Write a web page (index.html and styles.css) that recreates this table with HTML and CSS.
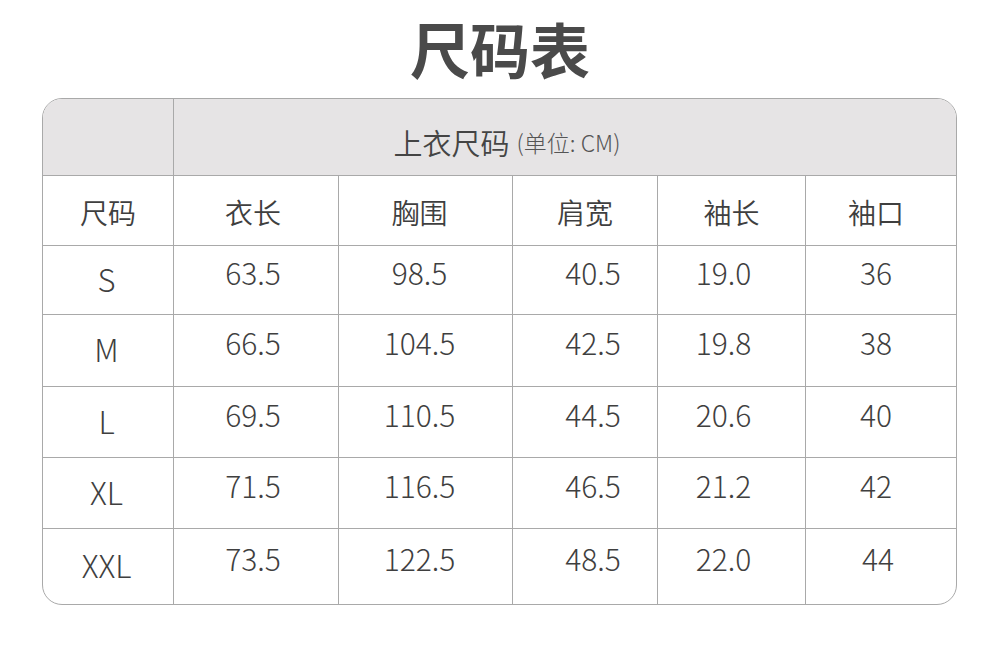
FILE: index.html
```html
<!DOCTYPE html>
<html lang="zh-CN">
<head>
<meta charset="utf-8">
<title>尺码表</title>
<link rel="stylesheet" href="styles.css">
</head>
<body>
<div class="page">
  <h1 class="title">尺码表</h1>
  <div class="table">
    <div class="cell head blank"></div>
    <div class="cell head span">上衣尺码<span class="unit">(单位: CM)</span></div>

    <div class="cell r2 first">尺码</div>
    <div class="cell r2 c2">衣长</div>
    <div class="cell r2 c3">胸围</div>
    <div class="cell r2">肩宽</div>
    <div class="cell r2">袖长</div>
    <div class="cell r2 c6">袖口</div>

    <div class="cell r3 first size">S</div>
    <div class="cell r3 num c2">63.5</div>
    <div class="cell r3 num c3">98.5</div>
    <div class="cell r3 num sh">40.5</div>
    <div class="cell r3 num sl">19.0</div>
    <div class="cell r3 num c6">36</div>

    <div class="cell r4 first size">M</div>
    <div class="cell r4 num c2">66.5</div>
    <div class="cell r4 num c3">104.5</div>
    <div class="cell r4 num sh">42.5</div>
    <div class="cell r4 num sl">19.8</div>
    <div class="cell r4 num c6">38</div>

    <div class="cell r5 first size">L</div>
    <div class="cell r5 num c2">69.5</div>
    <div class="cell r5 num c3">110.5</div>
    <div class="cell r5 num sh">44.5</div>
    <div class="cell r5 num sl">20.6</div>
    <div class="cell r5 num c6">40</div>

    <div class="cell r6 first size">XL</div>
    <div class="cell r6 num c2">71.5</div>
    <div class="cell r6 num c3">116.5</div>
    <div class="cell r6 num sh">46.5</div>
    <div class="cell r6 num sl">21.2</div>
    <div class="cell r6 num c6">42</div>

    <div class="cell r7 first size">XXL</div>
    <div class="cell r7 num c2">73.5</div>
    <div class="cell r7 num c3">122.5</div>
    <div class="cell r7 num sh">48.5</div>
    <div class="cell r7 num sl">22.0</div>
    <div class="cell r7 num c6 last">44</div>
  </div>
</div>
</body>
</html>
```
FILE: styles.css
```css
html, body {
  margin: 0;
  padding: 0;
  background: #ffffff;
}
body {
  font-family: "Noto Sans CJK SC", "Noto Sans", sans-serif;
  color: #444444;
}
.page {
  width: 1000px;
  height: 650px;
  padding-top: 17px;
  box-sizing: border-box;
}
.title {
  margin: 0;
  height: 81px;
  font-size: 60px;
  line-height: 62px;
  font-weight: 700;
  color: #4a4a4a;
  text-align: center;
}
.table {
  margin-left: 42px;
  width: 915px;
  box-sizing: border-box;
  border: 1px solid #a9a9a9;
  border-radius: 20px;
  overflow: hidden;
  display: grid;
  grid-template-columns: 130px 165px 174px 145px 148px 151px;
  grid-template-rows: 76px 70px 69px 72px 71px 71px 76px;
}
.cell {
  display: flex;
  align-items: center;
  justify-content: center;
  box-sizing: border-box;
  border-left: 1px solid #a9a9a9;
  border-top: 1px solid #a9a9a9;
  font-size: 29px;
  font-weight: 300;
  color: #3f3f3f;
}
.cell.first {
  border-left: none;
}
.head {
  background: #e6e4e5;
  border-top: none;
}
.head.blank {
  border-left: none;
}
.head.span {
  grid-column: 2 / 7;
  padding-top: 10px;
  padding-right: 116px;
  font-size: 29px;
  font-weight: 350;
  color: #444;
}
.unit {
  font-size: 23px;
  margin-left: 7px;
  color: #555;
  font-weight: 300;
}
.r2 {
  font-weight: 350;
  font-size: 28px;
  padding-top: 2px;
}
.num {
  font-size: 30px;
  padding-bottom: 17px;
}
.size {
  font-size: 31px;
  padding-bottom: 4px;
  padding-right: 3px;
}
.c2 {
  padding-right: 6px;
}
.c3 {
  padding-right: 12px;
}
.c6 {
  padding-right: 10px;
}
.c6.last {
  padding-right: 6px;
}
.sh {
  padding-left: 16px;
}
.sl {
  padding-right: 16px;
}
```
